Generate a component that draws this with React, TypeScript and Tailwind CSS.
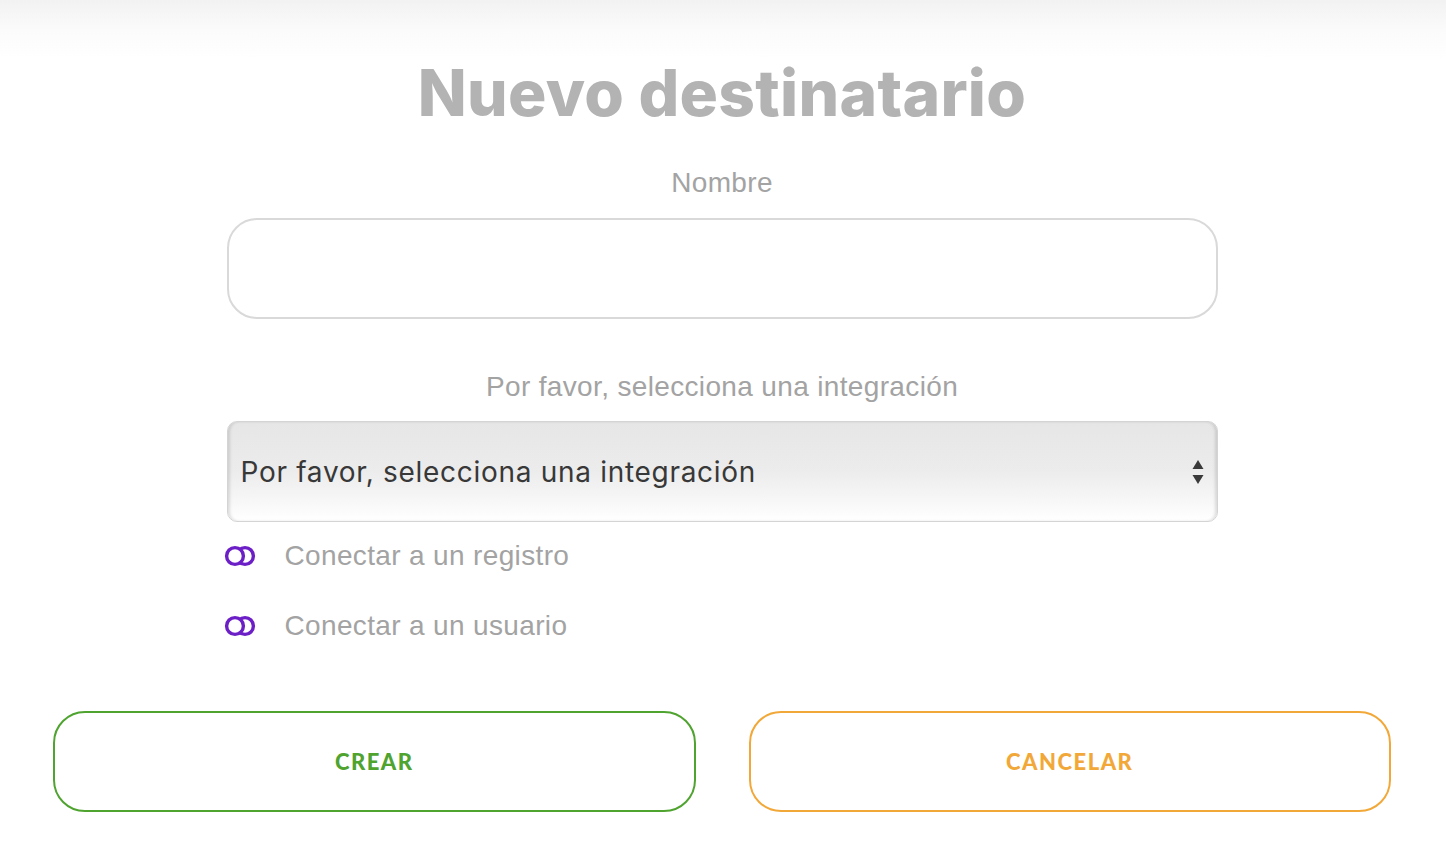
import React from "react";

function ToggleIcon() {
  return (
    <svg width="33" height="22" viewBox="0 0 33 22" fill="none">
      <circle cx="21" cy="11" r="8.4" stroke="#6c1fc6" strokeWidth="3.4" />
      <circle cx="11" cy="11" r="8.4" fill="white" stroke="#6c1fc6" strokeWidth="3.4" />
    </svg>
  );
}

function SelectArrows() {
  return (
    <svg width="12" height="26" viewBox="0 0 12 26">
      <path d="M6 1 L11.5 10 L0.5 10 Z" fill="#3a3a3a" />
      <path d="M6 25 L11.5 16 L0.5 16 Z" fill="#3a3a3a" />
    </svg>
  );
}

const labelFont = { fontFamily: "'Liberation Sans', Arial, sans-serif" };

export default function App() {
  return (
    <div className="min-h-[846px] w-full bg-white">
      <div className="h-[60px] w-full bg-gradient-to-b from-[#f2f2f2] via-[#fbfbfb] to-white" />
      <div className="-mt-[60px] flex flex-col items-center pl-[53px] pr-[55px] pt-[56px]">
        <h1
          className="text-[64px] font-extrabold leading-[74px] tracking-[0.3px] text-[#b3b3b3]"
          style={{ fontFamily: "Inter, 'Liberation Sans', sans-serif" }}
        >
          Nuevo destinatario
        </h1>

        <label
          className="mt-[35px] text-[28px] leading-[36px] tracking-[0.35px] text-[#a3a3a3]"
          style={labelFont}
        >
          Nombre
        </label>
        <input
          type="text"
          className="mt-[17px] h-[101px] w-[991px] rounded-[30px] border-2 border-[#d9d9d9] bg-white px-6 text-[26px] outline-none"
        />

        <label
          className="mt-[50px] text-[28px] leading-[36px] tracking-[0.35px] text-[#a3a3a3]"
          style={labelFont}
        >
          Por favor, selecciona una integración
        </label>
        <div className="relative mt-[16px] flex h-[101px] w-[991px] items-center rounded-[10px] border border-[#d4d4d4] bg-gradient-to-b from-[#e6e6e6] via-[#ececec] to-white pl-[13px] pr-[13px] shadow-[inset_3px_0_3px_-1px_rgba(0,0,0,0.12),inset_-3px_0_3px_-1px_rgba(0,0,0,0.12)]">
          <span
            className="flex-1 text-[28px] tracking-[0.7px] text-[#383838]"
            style={{ fontFamily: "Inter, 'Liberation Sans', sans-serif" }}
          >
            Por favor, selecciona una integración
          </span>
          <SelectArrows />
        </div>

        <div className="w-[991px]">
          <div className="mt-[19px] flex h-[30px] items-center gap-[28px] -ml-[3px]">
            <ToggleIcon />
            <span className="text-[28px] tracking-[0.35px] text-[#a3a3a3]" style={labelFont}>
              Conectar a un registro
            </span>
          </div>
          <div className="mt-[40px] flex h-[30px] items-center gap-[28px] -ml-[3px]">
            <ToggleIcon />
            <span className="text-[28px] tracking-[0.35px] text-[#a3a3a3]" style={labelFont}>
              Conectar a un usuario
            </span>
          </div>
        </div>

        <div className="mt-[70px] grid w-full grid-cols-2 gap-[53px]">
          <button
            className="flex h-[101px] items-center justify-center rounded-[32px] border-2 border-[#4fa32f] bg-white text-[22px] font-black uppercase tracking-[1.5px] text-[#4fa32f]"
            style={{ fontFamily: "Lato, 'Liberation Sans', sans-serif" }}
          >
            Crear
          </button>
          <button
            className="flex h-[101px] items-center justify-center rounded-[32px] border-2 border-[#f2a838] bg-white text-[22px] font-black uppercase tracking-[1.5px] text-[#f2a838]"
            style={{ fontFamily: "Lato, 'Liberation Sans', sans-serif" }}
          >
            Cancelar
          </button>
        </div>
      </div>
    </div>
  );
}
